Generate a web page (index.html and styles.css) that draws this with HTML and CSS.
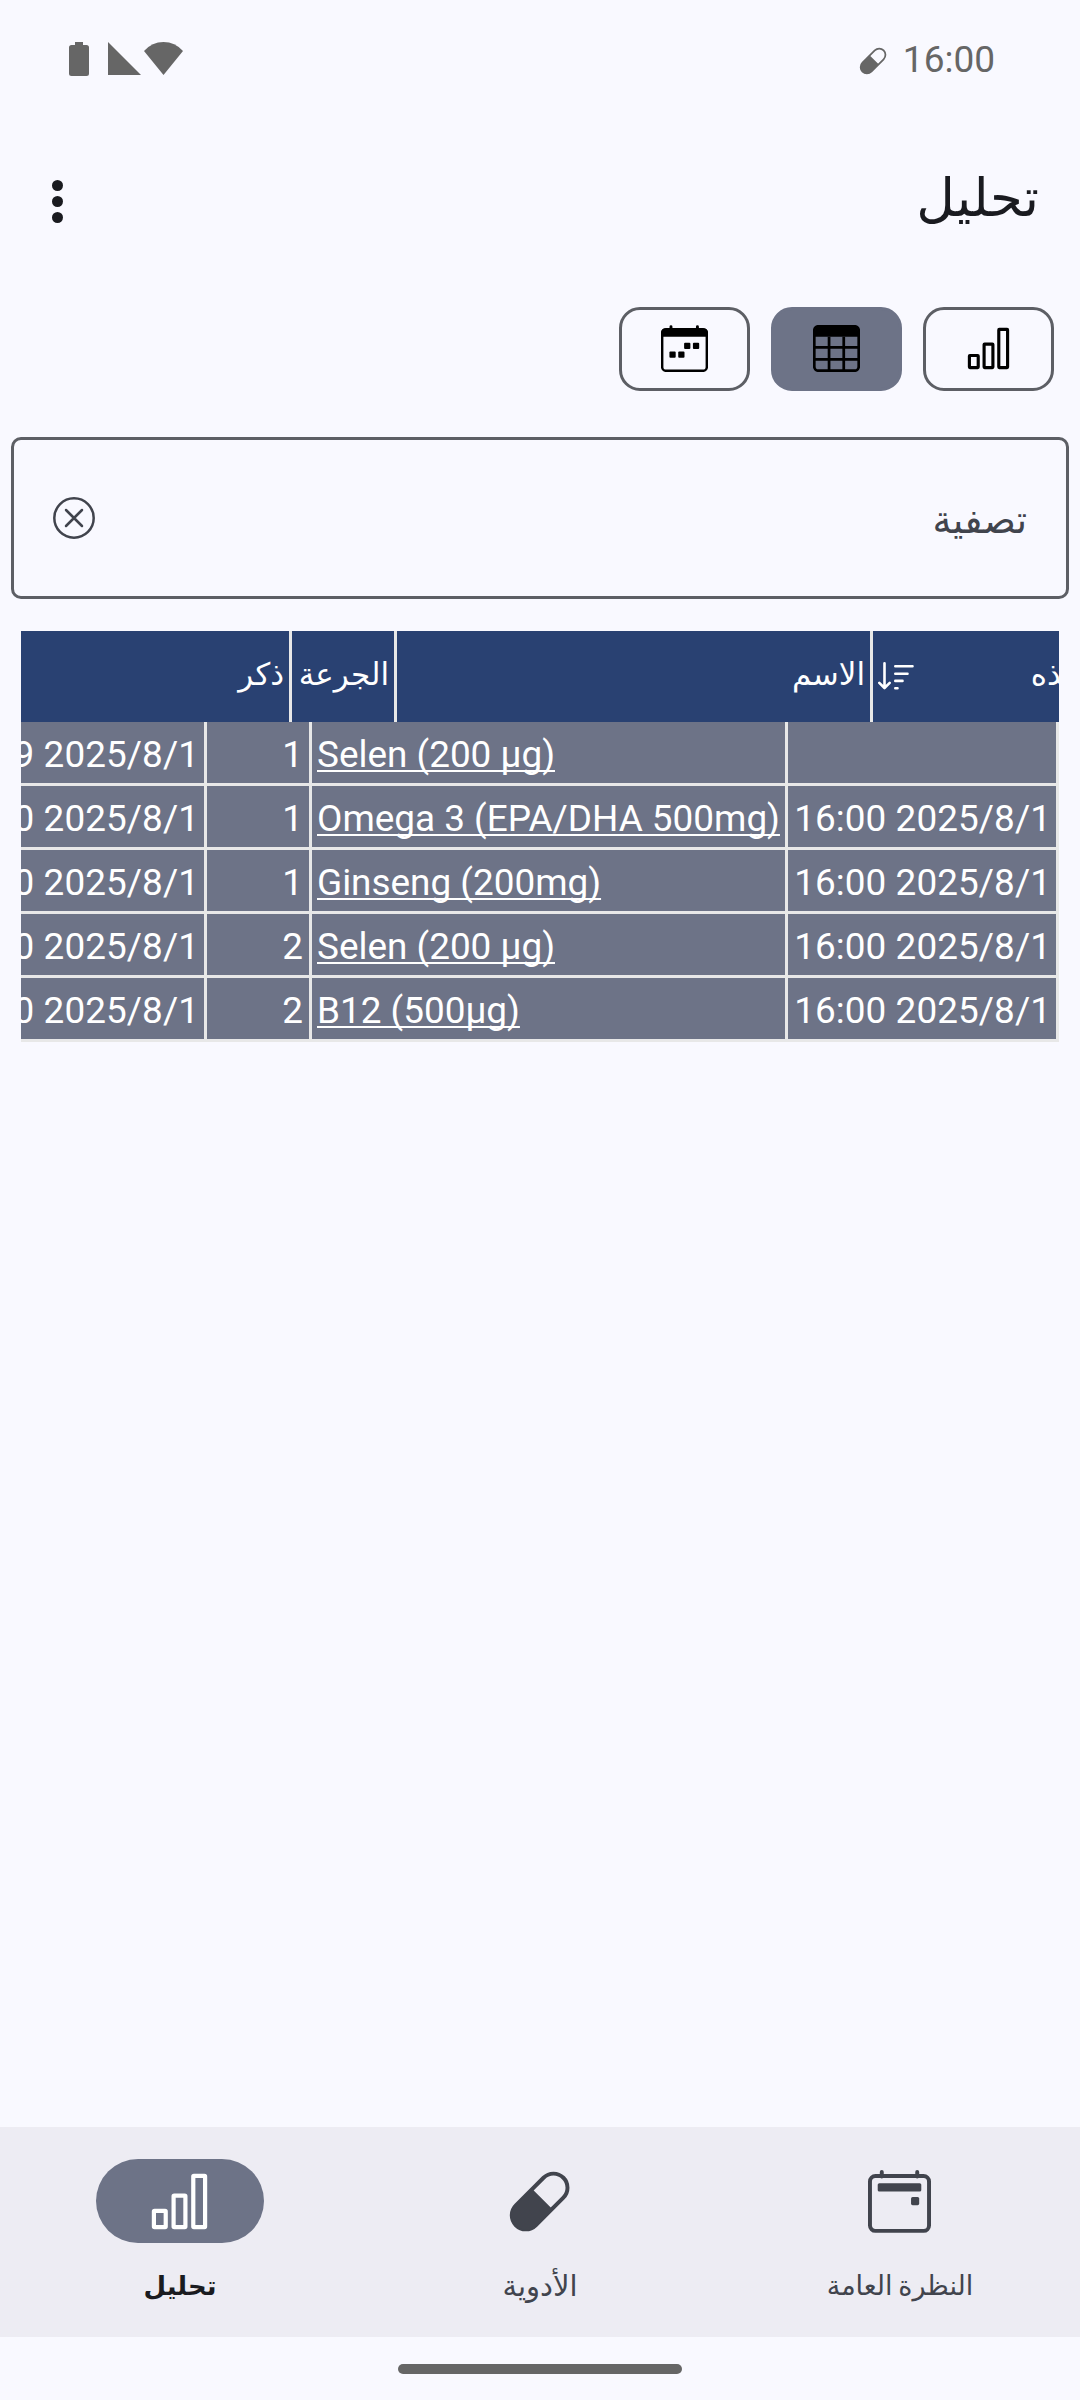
FILE: index.html
```html
<!DOCTYPE html>
<html lang="ar" dir="rtl">
<head>
    <meta charset="UTF-8">
    <meta name="viewport" content="width=device-width, initial-scale=1.0">
    <title>تحليل</title>
    <link rel="stylesheet" href="styles.css">
</head>
<body>
    <svg class="sprite" width="0" height="0">
        <symbol id="icon-bars" viewBox="0 0 24 24">
            <g fill="none" stroke="currentColor" stroke-width="1.6">
                <rect x="2.25" y="15.6" width="4.5" height="6.15" rx=".25"/>
                <rect x="9.75" y="9.75" width="4.5" height="12" rx=".25"/>
                <rect x="17.25" y="2.25" width="4.5" height="19.5" rx=".25"/>
            </g>
        </symbol>
        <symbol id="icon-pill" viewBox="0 0 24 24">
            <g transform="translate(12.05 12) rotate(-45)">
                <rect x="-12.8" y="-5.35" width="25.6" height="10.7" rx="5.35" fill="none" stroke="currentColor" stroke-width="1.5"/>
                <path d="M1.4 -5.4H-7.5A5.4 5.4 0 0 0 -7.5 5.4H1.4Z" fill="currentColor"/>
            </g>
        </symbol>
    </svg>

    <div class="status-bar">
        <div class="status-left">
            <span class="time">16:00</span>
            <svg class="status-pill"><use href="#icon-pill"/></svg>
        </div>
        <svg class="status-icons" viewBox="0 0 115 35" fill="currentColor">
            <path d="M6 0h8v3h3.500q2.500 0 2.500 2.500v26q0 2.500-2.500 2.500h-15q-2.500 0-2.500-2.500v-26q0-2.500 2.500-2.500h3.500z"/>
            <path d="M39 0v33h33z"/>
            <path d="M75 9Q83 0 94.500 0T114 9L94.500 33z"/>
        </svg>
    </div>

    <header class="app-bar">
        <h1 class="title">تحليل</h1>
        <div class="menu"><i></i><i></i><i></i></div>
    </header>

    <div class="views">
        <div class="view"><svg><use href="#icon-bars"/></svg></div>
        <div class="view active">
            <svg viewBox="0 0 24 24" fill="none" stroke="currentColor" stroke-width="1.4">
                <rect x=".65" y=".65" width="22.7" height="22.7" rx="2.2"/>
                <path d="M1 6V3q0-2 2-2h18q2 0 2 2v3z" fill="currentColor" stroke="none"/>
                <path d="M8.200 6v17M15.700 6v17M1 11.400h22M1 17.500h22"/>
            </svg>
        </div>
        <div class="view">
            <svg viewBox="0 0 24 24" fill="currentColor">
                <rect x=".6" y="2.200" width="22.800" height="21.200" rx="2" fill="none" stroke="currentColor" stroke-width="1.250"/>
                <path d="M0 6V4q0-2.400 2.400-2.400h19.200q2.400 0 2.400 2.400v2z"/>
                <path d="M5.100 3V.9M18.600 3V.9" stroke="currentColor" stroke-width="1.500" stroke-linecap="round"/>
                <rect x="4.300" y="13.500" width="3.200" height="3.200" rx=".5"/>
                <rect x="8.800" y="13.500" width="3.200" height="3.200" rx=".5"/>
                <rect x="11.800" y="9.100" width="3.200" height="3.200" rx=".5"/>
                <rect x="16.300" y="9.100" width="3.200" height="3.200" rx=".5"/>
            </svg>
        </div>
    </div>

    <div class="filter">
        <span class="filter-label">تصفية</span>
        <svg class="clear" viewBox="0 0 42 42" fill="none" stroke="currentColor" stroke-width="2.5" stroke-linecap="round">
            <circle cx="21" cy="21" r="19.7"/>
            <path d="M13 13l16 16M29 13l-16 16"/>
        </svg>
    </div>

    <div class="table">
        <div class="row head">
            <div class="cell date">
                <span class="taken">تم أخذه</span>
                <svg class="sort" viewBox="0 0 36 28" fill="none" stroke="currentColor" stroke-width="2.6" stroke-linecap="round" stroke-linejoin="round">
                    <path d="M6.500 1.300v24.500M1.300 20.800l5.200 5.200 5.200-5.200M17.300 4.300h17.200M17.300 11.700h12.200M17.300 18.900h7.200M17.300 26.200h2.200"/>
                </svg>
            </div>
            <div class="cell name">الاسم</div>
            <div class="cell dose">الجرعة</div>
            <div class="cell reminder">ذكر</div>
        </div>
        <div class="row">
            <div class="cell date"></div>
            <div class="cell name"><a>Selen (200 µg)</a></div>
            <div class="cell dose">1</div>
            <div class="cell reminder"><bdi dir="ltr">15:49 2025/8/1</bdi></div>
        </div>
        <div class="row">
            <div class="cell date"><bdi dir="ltr">16:00 2025/8/1</bdi></div>
            <div class="cell name"><a>Omega 3 (EPA/DHA 500mg)</a></div>
            <div class="cell dose">1</div>
            <div class="cell reminder"><bdi dir="ltr">16:00 2025/8/1</bdi></div>
        </div>
        <div class="row">
            <div class="cell date"><bdi dir="ltr">16:00 2025/8/1</bdi></div>
            <div class="cell name"><a>Ginseng (200mg)</a></div>
            <div class="cell dose">1</div>
            <div class="cell reminder"><bdi dir="ltr">16:00 2025/8/1</bdi></div>
        </div>
        <div class="row">
            <div class="cell date"><bdi dir="ltr">16:00 2025/8/1</bdi></div>
            <div class="cell name"><a>Selen (200 µg)</a></div>
            <div class="cell dose">2</div>
            <div class="cell reminder"><bdi dir="ltr">16:00 2025/8/1</bdi></div>
        </div>
        <div class="row">
            <div class="cell date"><bdi dir="ltr">16:00 2025/8/1</bdi></div>
            <div class="cell name"><a>B12 (500µg)</a></div>
            <div class="cell dose">2</div>
            <div class="cell reminder"><bdi dir="ltr">16:00 2025/8/1</bdi></div>
        </div>
    </div>

    <nav class="bottom-nav">
        <div class="nav-item">
            <div class="nav-icon">
                <svg viewBox="0 0 24 24" fill="currentColor">
                    <rect x=".75" y="2.300" width="22.500" height="20.900" rx="2.100" fill="none" stroke="currentColor" stroke-width="1.500"/>
                    <path d="M5.250 2.500V.75M18.750 2.500V.75" stroke="currentColor" stroke-width="1.500" stroke-linecap="round"/>
                    <rect x="3.700" y="5" width="16.600" height="3.200" rx=".6"/>
                    <rect x="16.400" y="10.300" width="3.100" height="3.100" rx=".6"/>
                </svg>
            </div>
            <span class="nav-label">النظرة العامة</span>
        </div>
        <div class="nav-item">
            <div class="nav-icon"><svg><use href="#icon-pill"/></svg></div>
            <span class="nav-label meds">الأدوية</span>
        </div>
        <div class="nav-item selected">
            <div class="nav-icon"><svg><use href="#icon-bars"/></svg></div>
            <span class="nav-label">تحليل</span>
        </div>
    </nav>
    <div class="gesture"><div class="gesture-bar"></div></div>
</body>
</html>
```
FILE: styles.css
```css
* {
    box-sizing: border-box;
}
body {
    margin: 0;
    width: 1080px;
    height: 2400px;
    display: flex;
    flex-direction: column;
    background: #f9f9ff;
    color: #1a1b20;
    font-family: Roboto, "DejaVu Sans", sans-serif;
    overflow: hidden;
}
.sprite {
    position: absolute;
}
svg {
    display: block;
}
.status-bar {
    height: 118px;
    padding: 0 85px 0 69px;
    display: flex;
    justify-content: space-between;
    align-items: center;
    color: #666;
}
.status-left {
    display: flex;
    align-items: center;
    gap: 16px;
}
.time {
    font-size: 37px;
}
.status-pill {
    width: 28px;
    height: 28px;
    margin-top: 3px;
}
.status-icons {
    width: 115px;
    height: 35px;
}
.app-bar {
    height: 168px;
    padding: 0 41px 0 52px;
    display: flex;
    justify-content: space-between;
    align-items: center;
}
.title {
    margin: 0 0 9px;
    font-size: 53px;
    line-height: 70px;
    font-weight: normal;
}
.menu {
    display: flex;
    flex-direction: column;
    gap: 5px;
    margin-bottom: 1px;
}
.menu i {
    width: 11px;
    height: 11px;
    border-radius: 50%;
    background: #1a1b20;
}
.views {
    display: flex;
    gap: 21px;
    padding: 21px 26px 0;
}
.view {
    width: 131px;
    height: 84px;
    border: 3px solid #5d5f65;
    border-radius: 21px;
    display: flex;
    align-items: center;
    justify-content: center;
    color: #000;
}
.view.active {
    background: #6d7387;
    border-color: #6d7387;
}
.view svg {
    width: 47px;
    height: 47px;
    margin-bottom: 1px;
}
.filter {
    height: 162px;
    margin: 46px 11px 0;
    padding: 0 39px 0 39px;
    border: 3px solid #5d5f65;
    border-radius: 10px;
    display: flex;
    align-items: center;
    justify-content: space-between;
    color: #41444d;
}
.filter-label {
    font-size: 38px;
    margin-top: 4px;
}
.clear {
    width: 42px;
    height: 42px;
}
.table {
    width: 1038px;
    margin: 32px 21px 0;
    overflow: hidden;
    color: #fff;
    font-size: 36.9px;
}
.row {
    display: flex;
    height: 64px;
    background: #6d7387;
    border-right: 3px solid #e8e8e8;
    border-bottom: 3px solid #e8e8e8;
}
.cell {
    flex: none;
    height: 61px;
    padding: 0 5px;
    line-height: 65px;
    white-space: nowrap;
    border-left: 3px solid #e8e8e8;
}
.date {
    width: 271px;
}
.name {
    width: 476px;
}
.dose {
    width: 105px;
    padding-right: 6px;
}
.reminder {
    width: 271px;
}
.cell bdi {
    letter-spacing: .07px;
}
.name a {
    display: block;
    direction: ltr;
    text-align: left;
    text-decoration: underline;
    text-decoration-thickness: 2px;
    text-decoration-skip-ink: none;
    text-underline-offset: 3px;
}
/* header is scrolled a little further than the body rows */
.head {
    height: 91px;
    margin-right: -82px;
    background: #294172;
    border: none;
    font-size: 31px;
}
.head .cell {
    height: 91px;
    line-height: 88px;
    padding-right: 5px;
}
.head .date {
    display: flex;
    justify-content: space-between;
    padding-right: 13px;
}
.head .reminder {
    border: none;
}
.sort {
    width: 36px;
    height: 28px;
    margin-top: 31px;
}
.bottom-nav {
    height: 210px;
    margin-top: auto;
    display: flex;
    background: #edecf3;
    color: #41444d;
}
.nav-item {
    flex: 1;
    display: flex;
    flex-direction: column;
    align-items: center;
    padding-top: 32px;
}
.nav-icon {
    width: 168px;
    height: 84px;
    border-radius: 42px;
    display: flex;
    align-items: center;
    justify-content: center;
}
.nav-icon svg {
    width: 63px;
    height: 63px;
    margin: 0 1px 0 0;
}
.nav-label {
    font-size: 27px;
    line-height: 40px;
    margin-top: 23px;
    word-spacing: -1px;
}
.nav-label.meds {
    font-size: 29px;
}
.selected .nav-icon {
    background: #6d7387;
    color: #fff;
}
.selected .nav-label {
    color: #1a1b20;
    font-size: 26px;
    font-weight: bold;
}
.gesture {
    height: 63px;
    padding-top: 27px;
    display: flex;
    justify-content: center;
}
.gesture-bar {
    width: 284px;
    height: 10px;
    border-radius: 5px;
    background: #666;
}
```
